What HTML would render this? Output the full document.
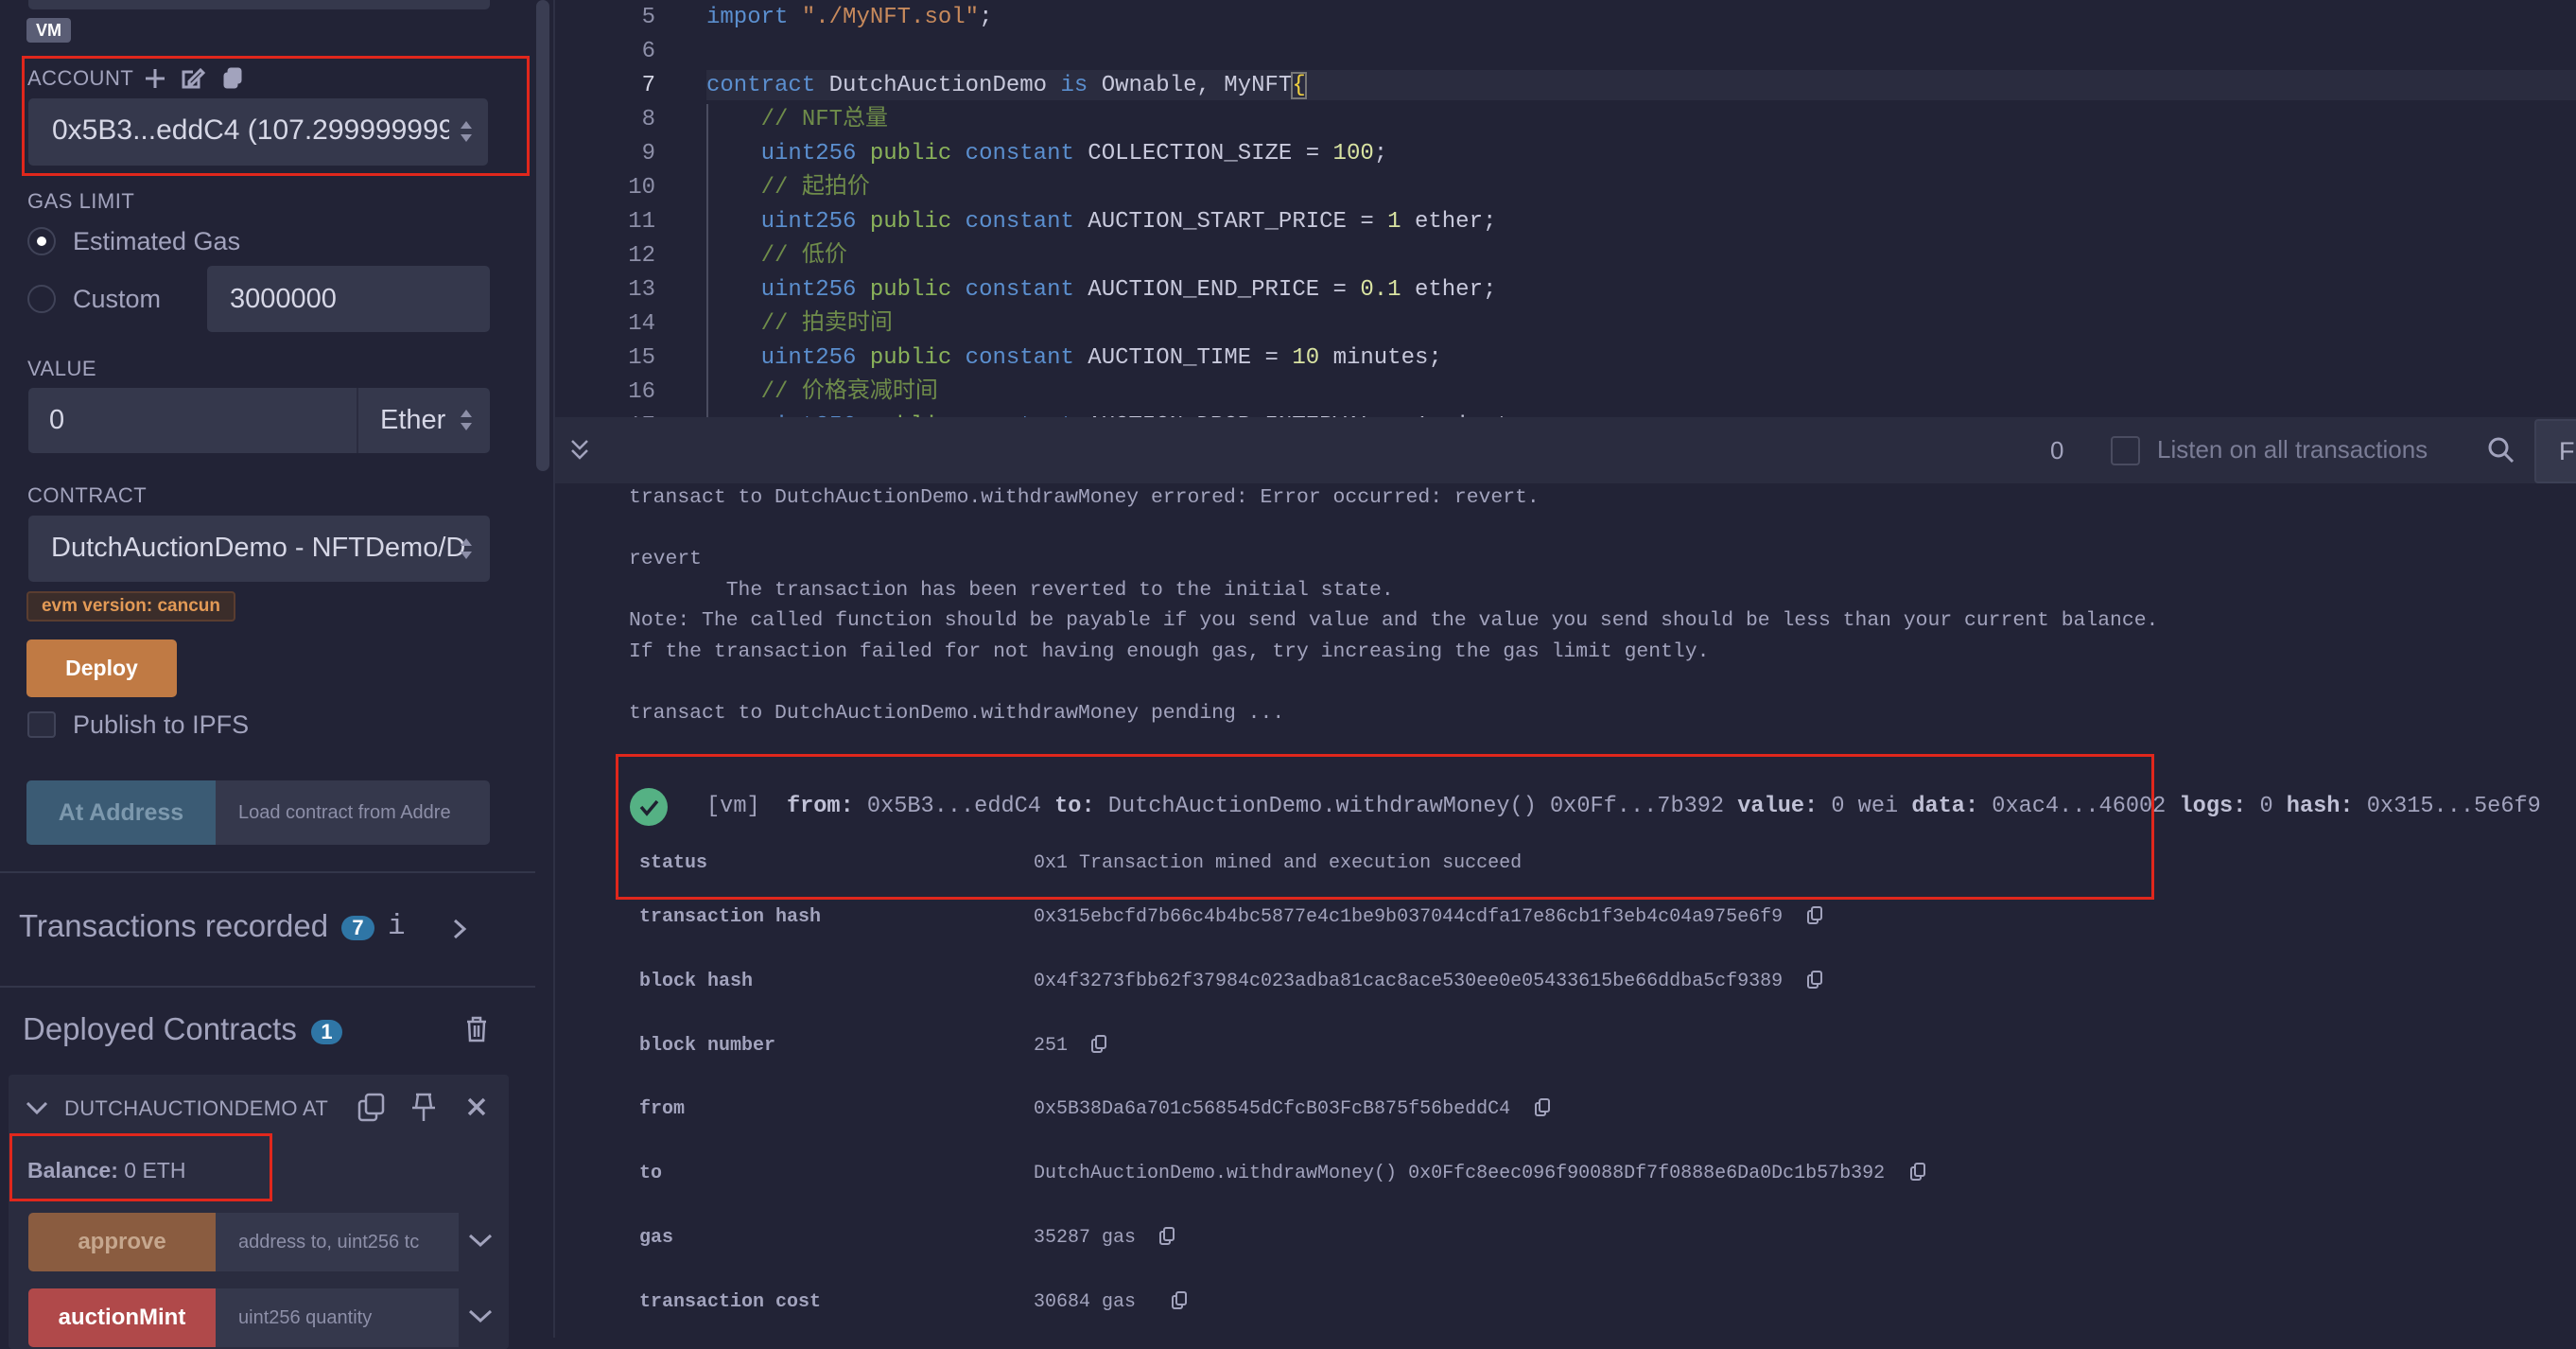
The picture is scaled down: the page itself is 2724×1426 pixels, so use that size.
<!DOCTYPE html>
<html><head><meta charset="utf-8"><style>
*{margin:0;padding:0;box-sizing:border-box}
body{width:2724px;height:1414px;overflow:hidden;background:#222336;font-family:"Liberation Sans","Noto Sans CJK SC",sans-serif;color:#a2a3bd;position:relative}
.a{position:absolute;white-space:pre}
.lbl{font-size:22px;color:#a2a3bd;letter-spacing:.5px}
.inp{position:absolute;background:#35384c;border-radius:5px}
.m{font-family:"Liberation Mono","Noto Sans CJK SC",monospace}
.code{font-size:24px;line-height:36px}
.kw{color:#5b8fcf}.pb{color:#8ab25a}.cm{color:#6f8c4a}.st{color:#c88a5c}.nm{color:#d9e3a2}.tx{color:#c8c9dc}
.t{font-size:21.4px;line-height:32.5px;color:#a2a3bd}
.r{font-size:20px;color:#a2a3bd}
.k{font-weight:bold}
.badge{position:absolute;background:#2f76a6;color:#fff;border-radius:14px;font-weight:bold;font-size:22px;text-align:center}
</style></head><body>
<div class="a" style="left:0;top:0;width:585px;height:1414px;background:#222336"></div>
<div class="inp" style="left:30px;top:-10px;width:488px;height:20px"></div>
<div class="a" style="left:585px;top:0;width:2px;height:1414px;background:#2e3044"></div>
<div class="a" style="left:567px;top:0;width:14px;height:498px;background:#3a3d52;border-radius:7px"></div>
<div class="a" style="left:28px;top:19px;width:47px;height:26px;background:#5a5d75;border-radius:4px;color:#fff;font-weight:bold;font-size:18px;text-align:center;line-height:26px">VM</div>
<div class="a" style="left:23px;top:59px;width:537px;height:127px;border:3px solid #e0271c"></div>
<div class="a lbl" style="left:29px;top:70px">ACCOUNT</div>
<svg class="a" style="left:152px;top:70px" width="110" height="26" viewBox="0 0 110 26" fill="none" stroke="#a2a3bd" stroke-width="3"><path d="M12 3v20M2 13h20"/><path d="M52 6h-10v16h16v-9"/><path d="M48 16l12-12 3 3-12 12h-3z"/><rect x="86" y="8" width="12" height="14" rx="2" fill="#a2a3bd"/><rect x="90" y="3" width="12" height="14" rx="2" fill="#a2a3bd"/></svg>
<div class="inp" style="left:30px;top:104px;width:486px;height:71px"></div>
<div class="a" style="left:55px;top:121px;font-size:30px;color:#d6d7e6;width:420px;overflow:hidden">0x5B3...eddC4 (107.299999999</div>
<svg class="a" style="left:485px;top:125px" width="16" height="28"><path d="M2 11l6-8 6 8zM2 17l6 8 6-8z" fill="#8d8fa8"/></svg>
<div class="a lbl" style="left:29px;top:200px">GAS LIMIT</div>
<div class="a" style="left:29px;top:240px;width:30px;height:30px;border-radius:50%;border:2px solid #404358"></div>
<div class="a" style="left:39px;top:250px;width:10px;height:10px;border-radius:50%;background:#fff"></div>
<div class="a" style="left:77px;top:240px;font-size:27px">Estimated Gas</div>
<div class="a" style="left:29px;top:301px;width:30px;height:30px;border-radius:50%;border:2px solid #404358"></div>
<div class="a" style="left:77px;top:301px;font-size:27px">Custom</div>
<div class="inp" style="left:219px;top:281px;width:299px;height:70px"></div>
<div class="a" style="left:243px;top:300px;font-size:29px;color:#d6d7e6">3000000</div>
<div class="a lbl" style="left:29px;top:377px">VALUE</div>
<div class="inp" style="left:30px;top:410px;width:488px;height:69px"></div>
<div class="a" style="left:377px;top:410px;width:2px;height:69px;background:#2a2c3f"></div>
<div class="a" style="left:52px;top:428px;font-size:29px;color:#d6d7e6">0</div>
<div class="a" style="left:402px;top:428px;font-size:29px;color:#d6d7e6">Ether</div>
<svg class="a" style="left:485px;top:430px" width="16" height="28"><path d="M2 11l6-8 6 8zM2 17l6 8 6-8z" fill="#8d8fa8"/></svg>
<div class="a lbl" style="left:29px;top:511px">CONTRACT</div>
<div class="inp" style="left:30px;top:545px;width:488px;height:70px"></div>
<div class="a" style="left:54px;top:563px;font-size:29px;color:#d6d7e6;width:440px;overflow:hidden">DutchAuctionDemo - NFTDemo/D</div>
<svg class="a" style="left:485px;top:566px" width="16" height="28"><path d="M2 11l6-8 6 8zM2 17l6 8 6-8z" fill="#8d8fa8"/></svg>
<div class="a" style="left:28px;top:625px;width:221px;height:32px;background:#3b2d2a;border:2px solid #5a3d30;border-radius:4px;color:#e39a56;font-weight:bold;font-size:19px;line-height:28px;text-align:center">evm version: cancun</div>
<div class="a" style="left:28px;top:676px;width:159px;height:61px;background:#c07a44;border-radius:5px;color:#fff;font-weight:bold;font-size:23px;line-height:61px;text-align:center">Deploy</div>
<div class="a" style="left:29px;top:752px;width:30px;height:28px;border:2px solid #404358;border-radius:4px;background:#2a2c3f"></div>
<div class="a" style="left:77px;top:751px;font-size:27px">Publish to IPFS</div>
<div class="a" style="left:28px;top:825px;width:200px;height:68px;background:#3b5b74;border-radius:5px 0 0 5px;color:#7c98ad;font-weight:bold;font-size:25px;line-height:68px;text-align:center">At Address</div>
<div class="a" style="left:228px;top:825px;width:290px;height:68px;background:#35384c;border-radius:0 5px 5px 0;color:#8d8fa8;font-size:20px;line-height:68px;padding-left:24px;overflow:hidden">Load contract from Addre</div>
<div class="a" style="left:0;top:921px;width:566px;height:2px;background:#33364a"></div>
<div class="a" style="left:20px;top:960px;font-size:33px">Transactions recorded</div>
<div class="badge" style="left:361px;top:968px;width:35px;height:26px;line-height:26px">7</div>
<div class="a" style="left:410px;top:962px;font-size:31px;font-family:'Liberation Mono',monospace">i</div>
<svg class="a" style="left:476px;top:970px" width="20" height="24"><path d="M5 3l10 9-10 9" stroke="#a2a3bd" stroke-width="3" fill="none"/></svg>
<div class="a" style="left:0;top:1042px;width:566px;height:2px;background:#33364a"></div>
<div class="a" style="left:24px;top:1069px;font-size:33px">Deployed Contracts</div>
<div class="badge" style="left:329px;top:1078px;width:33px;height:26px;line-height:26px">1</div>
<svg class="a" style="left:492px;top:1074px" width="24" height="28" fill="none" stroke="#a2a3bd" stroke-width="2.5"><path d="M2 6h20M8 6V2h8v4M4 6l1 20h14l1-20M10 10v12M14 10v12"/></svg>
<div class="a" style="left:9px;top:1136px;width:529px;height:290px;background:#2a2c3f;border-radius:4px"></div>
<svg class="a" style="left:26px;top:1162px" width="26" height="18"><path d="M3 4l10 10 10-10" stroke="#a2a3bd" stroke-width="3" fill="none"/></svg>
<div class="a" style="left:68px;top:1159px;font-size:22px;letter-spacing:.3px">DUTCHAUCTIONDEMO AT</div>
<svg class="a" style="left:378px;top:1154px" width="140" height="34" fill="none" stroke="#a2a3bd" stroke-width="2.5"><rect x="2" y="10" width="18" height="20" rx="3"/><rect x="9" y="3" width="18" height="20" rx="3" fill="#2a2c3f"/><path d="M62 3h16M64 3l-2 14h16l-2-14M58 17h24M70 17v14"/><path d="M118 8l16 16M134 8l-16 16" stroke-width="3.5"/></svg>
<div class="a" style="left:10px;top:1198px;width:278px;height:72px;border:3px solid #e0271c"></div>
<div class="a" style="left:29px;top:1224px;font-size:23px"><b>Balance:</b> 0 ETH</div>
<div class="a" style="left:30px;top:1282px;width:198px;height:62px;background:#8a5c40;border-radius:5px 0 0 5px;color:#c6a78e;font-weight:bold;font-size:24px;line-height:62px;text-align:center">approve</div>
<div class="a" style="left:228px;top:1282px;width:257px;height:62px;background:#35384c;color:#8d8fa8;font-size:20px;line-height:62px;padding-left:24px;overflow:hidden">address to, uint256 tc</div>
<svg class="a" style="left:494px;top:1302px" width="28" height="18"><path d="M3 4l11 10 11-10" stroke="#a2a3bd" stroke-width="3" fill="none"/></svg>
<div class="a" style="left:30px;top:1362px;width:198px;height:62px;background:#b0494a;border-radius:5px 0 0 5px;color:#fff;font-weight:bold;font-size:24px;line-height:62px;text-align:center">auctionMint</div>
<div class="a" style="left:228px;top:1362px;width:257px;height:62px;background:#35384c;color:#8d8fa8;font-size:20px;line-height:62px;padding-left:24px">uint256 quantity</div>
<svg class="a" style="left:494px;top:1382px" width="28" height="18"><path d="M3 4l11 10 11-10" stroke="#a2a3bd" stroke-width="3" fill="none"/></svg>

<div class="a" style="left:747px;top:74px;width:1977px;height:32px;background:#2a2c3f"></div>
<div class="a" style="left:747px;top:110px;width:2px;height:331px;background:#4a4c60"></div>
<div class="a" style="left:587px;top:0;width:2137px;height:441px;overflow:hidden">
<div class="a m code" style="left:33px;top:1px;width:73px;text-align:right;color:#8d8fa8">5
6
<span style="color:#d6d7e6">7</span>
8
9
10
11
12
13
14
15
16
17</div>
<div class="a m code" style="left:160px;top:1px"><span class="kw">import</span> <span class="st">"./MyNFT.sol"</span><span class="tx">;</span>

<span class="kw">contract</span> <span class="tx">DutchAuctionDemo</span> <span class="kw">is</span> <span class="tx">Ownable, MyNFT</span><span style="color:#f0d040;outline:2px solid #777;outline-offset:-1px">{</span>
    <span class="cm">// NFT总量</span>
    <span class="kw">uint256</span> <span class="pb">public</span> <span class="kw">constant</span> <span class="tx">COLLECTION_SIZE = </span><span class="nm">100</span><span class="tx">;</span>
    <span class="cm">// 起拍价</span>
    <span class="kw">uint256</span> <span class="pb">public</span> <span class="kw">constant</span> <span class="tx">AUCTION_START_PRICE = </span><span class="nm">1</span> <span class="tx">ether;</span>
    <span class="cm">// 低价</span>
    <span class="kw">uint256</span> <span class="pb">public</span> <span class="kw">constant</span> <span class="tx">AUCTION_END_PRICE = </span><span class="nm">0.1</span> <span class="tx">ether;</span>
    <span class="cm">// 拍卖时间</span>
    <span class="kw">uint256</span> <span class="pb">public</span> <span class="kw">constant</span> <span class="tx">AUCTION_TIME = </span><span class="nm">10</span> <span class="tx">minutes;</span>
    <span class="cm">// 价格衰减时间</span>
    <span class="kw">uint256</span> <span class="pb">public</span> <span class="kw">constant</span> <span class="tx">AUCTION_DROP_INTERVAL = 1 minutes;</span></div>
</div>

<div class="a" style="left:587px;top:441px;width:2137px;height:70px;background:#2a2c3f"></div>
<svg class="a" style="left:602px;top:462px" width="22" height="28" fill="none" stroke="#a2a3bd" stroke-width="2.5"><path d="M3 4l8 8 8-8M3 14l8 8 8-8"/></svg>
<div class="a" style="left:2168px;top:461px;font-size:26px">0</div>
<div class="a" style="left:2232px;top:461px;width:31px;height:31px;border:2px solid #4a4c60;border-radius:4px"></div>
<div class="a" style="left:2281px;top:460px;font-size:26px;color:#7a7c95">Listen on all transactions</div>
<svg class="a" style="left:2630px;top:461px" width="30" height="30" fill="none" stroke="#a2a3bd" stroke-width="3"><circle cx="12" cy="12" r="9"/><path d="M19 19l8 8"/></svg>
<div class="a" style="left:2680px;top:443px;width:60px;height:68px;background:#35384c;border:2px solid #3d4055;border-radius:4px;font-size:27px;line-height:64px;padding-left:24px;color:#b0b1c8">Fi</div>

<div class="a m t" style="left:665px;top:510px">transact to DutchAuctionDemo.withdrawMoney errored: Error occurred: revert.

revert
        The transaction has been reverted to the initial state.
Note: The called function should be payable if you send value and the value you send should be less than your current balance.
If the transaction failed for not having enough gas, try increasing the gas limit gently.

transact to DutchAuctionDemo.withdrawMoney pending ...</div>
<div class="a" style="left:651px;top:797px;width:1627px;height:154px;border:3px solid #e0271c"></div>
<div class="a" style="left:666px;top:833px;width:40px;height:40px;border-radius:50%;background:#55b184"></div>
<svg class="a" style="left:666px;top:833px" width="40" height="40"><path d="M12 20l6 7 11-13" stroke="#1e2030" stroke-width="3.5" fill="none"/></svg>
<div class="a m" style="left:747px;top:838px;font-size:23.6px;line-height:30px;color:#a2a3bd">[vm]  <b style="color:#c0c1d6">from:</b> 0x5B3...eddC4 <b style="color:#c0c1d6">to:</b> DutchAuctionDemo.withdrawMoney() 0x0Ff...7b392 <b style="color:#c0c1d6">value:</b> 0 wei <b style="color:#c0c1d6">data:</b> 0xac4...46002 <b style="color:#c0c1d6">logs:</b> 0 <b style="color:#c0c1d6">hash:</b> 0x315...5e6f9</div>
<div class="a m r k" style="left:676px;top:901px">status</div>
<div class="a m r" style="left:1093px;top:901px">0x1 Transaction mined and execution succeed</div>
<div class="a m r k" style="left:676px;top:958px">transaction hash</div>
<div class="a m r" style="left:1093px;top:958px">0x315ebcfd7b66c4b4bc5877e4c1be9b037044cdfa17e86cb1f3eb4c04a975e6f9</div>
<div class="a m r k" style="left:676px;top:1026px">block hash</div>
<div class="a m r" style="left:1093px;top:1026px">0x4f3273fbb62f37984c023adba81cac8ace530ee0e05433615be66ddba5cf9389</div>
<div class="a m r k" style="left:676px;top:1094px">block number</div>
<div class="a m r" style="left:1093px;top:1094px">251</div>
<div class="a m r k" style="left:676px;top:1161px">from</div>
<div class="a m r" style="left:1093px;top:1161px">0x5B38Da6a701c568545dCfcB03FcB875f56beddC4</div>
<div class="a m r k" style="left:676px;top:1229px">to</div>
<div class="a m r" style="left:1093px;top:1229px">DutchAuctionDemo.withdrawMoney() 0x0Ffc8eec096f90088Df7f0888e6Da0Dc1b57b392</div>
<div class="a m r k" style="left:676px;top:1297px">gas</div>
<div class="a m r" style="left:1093px;top:1297px">35287 gas</div>
<div class="a m r k" style="left:676px;top:1365px">transaction cost</div>
<div class="a m r" style="left:1093px;top:1365px">30684 gas</div>
<svg class="a" style="left:0;top:0" width="2724" height="1414" fill="none" stroke="#a2a3bd" stroke-width="2">
<rect x="1912" y="963" width="10" height="13" rx="2"/><rect x="1916" y="959" width="10" height="13" rx="2" fill="#222336"/>
<rect x="1912" y="1031" width="10" height="13" rx="2"/><rect x="1916" y="1027" width="10" height="13" rx="2" fill="#222336"/>
<rect x="1155" y="1099" width="10" height="13" rx="2"/><rect x="1159" y="1095" width="10" height="13" rx="2" fill="#222336"/>
<rect x="1624" y="1166" width="10" height="13" rx="2"/><rect x="1628" y="1162" width="10" height="13" rx="2" fill="#222336"/>
<rect x="2021" y="1234" width="10" height="13" rx="2"/><rect x="2025" y="1230" width="10" height="13" rx="2" fill="#222336"/>
<rect x="1227" y="1302" width="10" height="13" rx="2"/><rect x="1231" y="1298" width="10" height="13" rx="2" fill="#222336"/>
<rect x="1240" y="1370" width="10" height="13" rx="2"/><rect x="1244" y="1366" width="10" height="13" rx="2" fill="#222336"/>
</svg>
</body></html>
